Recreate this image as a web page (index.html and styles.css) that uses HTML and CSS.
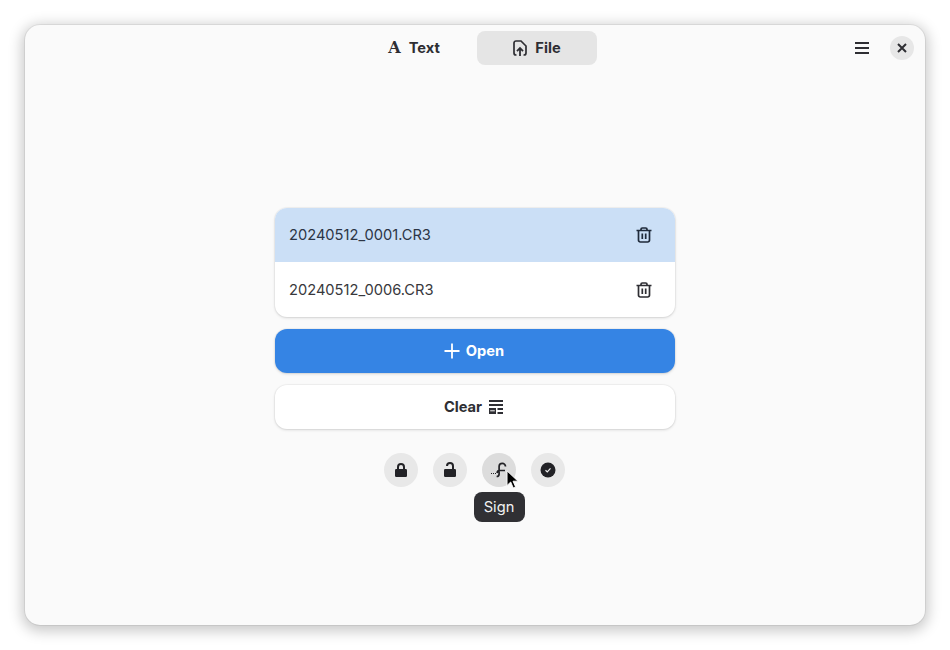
FILE: index.html
```html
<!DOCTYPE html>
<html lang="en">
<head>
  <meta charset="UTF-8" />
  <title>Sign</title>
  <link rel="stylesheet" href="styles.css">
</head>
<body>
  <div class="window">
    <header class="headerbar">
      <div class="tabs">
        <button class="tab tab-text">
          <span class="tab-letter">A</span>
          <span>Text</span>
        </button>
        <button class="tab tab-active">
          <svg class="icon-file" viewBox="0 0 14 16"><path d="M3.500 15H3A2 2 0 0 1 1 13V3A2 2 0 0 1 3 1H8l5 5v7a2 2 0 0 1-2 2h-.5" fill="none" stroke="#2e2e33" stroke-width="1.700"/><path d="M7 16V8.500M4 11.200 7 8l3 3.200" fill="none" stroke="#2e2e33" stroke-width="1.800"/></svg>
          <span>File</span>
        </button>
      </div>
      <div class="header-end">
        <button class="menu-btn">
          <svg class="icon-menu" viewBox="0 0 14 14"><path d="M0 2h14M0 7h14M0 12h14" stroke="#2e2e33" stroke-width="2"/></svg>
        </button>
        <button class="close-btn">
          <svg class="icon-small" viewBox="0 0 10 10"><path d="M1 1l8 8M9 1l-8 8" stroke="#2e2e33" stroke-width="2"/></svg>
        </button>
      </div>
    </header>

    <main class="content">
      <ul class="file-list">
        <li class="file-row file-row-selected">
          <span>20240512_0001.CR3</span>
          <svg class="icon" viewBox="0 0 16 16"><path d="M.5 3.500h15M5 3.500V2.300a1.300 1.300 0 0 1 1.300-1.300h3.400A1.300 1.300 0 0 1 11 2.300v1.200M2.500 3.500v9.700a1.800 1.800 0 0 0 1.800 1.800h7.400a1.800 1.800 0 0 0 1.800-1.800V3.500M6.300 6.500V12M9.700 6.500V12" fill="none" stroke="#1f2a3a" stroke-width="1.700"/></svg>
        </li>
        <li class="file-row">
          <span>20240512_0006.CR3</span>
          <svg class="icon" viewBox="0 0 16 16"><path d="M.5 3.500h15M5 3.500V2.300a1.300 1.300 0 0 1 1.300-1.300h3.400A1.300 1.300 0 0 1 11 2.300v1.200M2.500 3.500v9.700a1.800 1.800 0 0 0 1.800 1.800h7.400a1.800 1.800 0 0 0 1.800-1.800V3.500M6.300 6.500V12M9.700 6.500V12" fill="none" stroke="#2e2e33" stroke-width="1.700"/></svg>
        </li>
      </ul>

      <button class="pill pill-blue">
        <svg class="icon" viewBox="0 0 16 16"><path d="M8 .5v15M.5 8h15" stroke="#fff" stroke-width="1.800"/></svg>
        <span>Open</span>
      </button>
      <button class="pill">
        <span>Clear</span>
        <svg class="icon" viewBox="0 0 16 16"><path d="M1 1h14v2H1zM1 5h14v2H1zM9.500 9H15v2H9.500zM9.500 13H15v2H9.500z" fill="#2e2e33"/><path d="M1 9h7v6H1z" fill="#2e2e33"/><path d="M2.200 11.300h4.600v1H2.200z" fill="#fafafa"/></svg>
      </button>

      <div class="actions">
        <button class="round">
          <svg class="icon" viewBox="0 0 16 16"><path d="M5 8V5a3 3 0 0 1 6 0V8" fill="none" stroke="#222226" stroke-width="2"/><rect x="2" y="7" width="12" height="8" rx="1.200" fill="#222226"/></svg>
        </button>
        <button class="round">
          <svg class="icon" viewBox="0 0 16 16"><path d="M5 4a3 3 0 0 1 6 0V8" fill="none" stroke="#222226" stroke-width="2"/><rect x="2" y="7" width="12" height="8" rx="1.200" fill="#222226"/></svg>
        </button>
        <div class="round-wrap">
          <button class="round round-hover">
            <svg class="icon" viewBox="0 0 16 16"><path d="M14.500 4.500a3.200 3.200 0 0 0-6.400 0v7.500a2.500 2.500 0 0 1-2.500 2.500M14 8.500H9.500a3.200 3.200 0 0 0-3.500 2.500" fill="none" stroke="#222226" stroke-width="1.700"/><path d="M0 11.500h1M2 11.500h1M4 11.500h1" stroke="#222226" stroke-width="1"/></svg>
          </button>
          <div class="tooltip">Sign</div>
          <svg class="cursor" viewBox="0 0 14 22"><path d="M1 1v16l4-3.800 2.800 6.500 2.600-1.100-2.800-6.300H13z" fill="#000" stroke="#fff" stroke-width="1"/></svg>
        </div>
        <button class="round">
          <svg class="icon" viewBox="0 0 16 16"><circle cx="8" cy="8" r="7.500" fill="#222226"/><path d="M5.500 8.200l1.800 1.700 3.200-3.500" fill="none" stroke="#f0f0f0" stroke-width="1.200"/></svg>
        </button>
      </div>
    </main>
  </div>
</body>
</html>
```

FILE: styles.css
```css
* {
  box-sizing: border-box;
}

body {
  margin: 0;
  width: 950px;
  height: 650px;
  padding: 25px;
  overflow: hidden;
  background: #ffffff;
  font-family: "Inter", "Liberation Sans", sans-serif;
  color: #2e2e33;
}

button {
  border: 0;
  padding: 0;
  background: none;
  font-family: inherit;
  color: inherit;
  display: flex;
  align-items: center;
  justify-content: center;
}

.window {
  width: 900px;
  height: 600px;
  border-radius: 15px;
  background: #fafafa;
  box-shadow: 0 0 0 1px rgba(0, 0, 0, 0.06), 0 3px 14px 3px rgba(0, 0, 0, 0.22);
}

.headerbar {
  display: grid;
  grid-template-columns: 1fr auto 1fr;
  padding: 6px 0 0 4px;
}

.tabs {
  grid-column: 2;
  display: flex;
}

.tab {
  width: 120px;
  height: 34px;
  gap: 8px;
  border-radius: 8px;
  font-size: 14.670px;
  font-weight: 700;
}

.tab-text {
  padding-right: 6px;
}

.tab span {
  position: relative;
  top: -0.5px;
}

.tab-active {
  background: #e5e5e5;
}

.tab-letter {
  font-family: "DejaVu Serif", "Liberation Serif", serif;
  font-size: 16px;
  font-weight: 700;
}

.icon-file {
  width: 14px;
  height: 16px;
  flex: none;
}

.header-end {
  display: flex;
  justify-content: flex-end;
  align-items: center;
  gap: 21px;
  padding-right: 11px;
}

.menu-btn {
  width: 14px;
  height: 24px;
}

.icon-menu {
  width: 14px;
  height: 14px;
}

.close-btn {
  width: 24px;
  height: 24px;
  border-radius: 50%;
  background: #e7e7e7;
}

.icon {
  width: 16px;
  height: 16px;
  flex: none;
}

.icon-small {
  width: 10px;
  height: 10px;
}

.content {
  display: flex;
  flex-direction: column;
  align-items: center;
  padding-top: 143px;
}

.file-list {
  width: 400px;
  margin: 0 0 12px;
  padding: 0;
  list-style: none;
  border-radius: 12px;
  overflow: hidden;
  background: #fff;
  box-shadow: 0 0 0 1px rgba(0, 0, 0, 0.03), 0 1px 3px rgba(0, 0, 0, 0.14);
}

.file-row {
  height: 55px;
  display: flex;
  align-items: center;
  justify-content: space-between;
  padding: 0 23px 0 14px;
  font-size: 14.670px;
  color: #38383c;
}

.file-row-selected {
  height: 54px;
  background: #cbdff6;
  color: #2c3545;
}

.pill {
  width: 400px;
  height: 44px;
  gap: 6px;
  margin-bottom: 12px;
  padding-right: 2px;
  border-radius: 12px;
  background: #fff;
  font-size: 14.670px;
  font-weight: 700;
  box-shadow: 0 0 0 1px rgba(0, 0, 0, 0.03), 0 1px 3px rgba(0, 0, 0, 0.14);
}

.pill span {
  position: relative;
  top: -0.5px;
}

.pill-blue {
  background: #3584e4;
  color: #fff;
}

.actions {
  display: flex;
  gap: 15px;
  margin-top: 12px;
  margin-right: 2px;
}

.round-wrap {
  position: relative;
}

.round {
  width: 34px;
  height: 34px;
  border-radius: 50%;
  background: #e8e8e8;
}

.round-hover {
  background: #dcdcdc;
}

.tooltip {
  position: absolute;
  left: -8px;
  top: 39px;
  width: 51px;
  height: 30px;
  padding-bottom: 1px;
  display: flex;
  align-items: center;
  justify-content: center;
  border-radius: 8px;
  background: #303034;
  color: #f2f2f2;
  font-size: 14.670px;
}

.cursor {
  position: absolute;
  left: 24px;
  top: 17px;
  width: 13px;
  height: 20px;
}
```
